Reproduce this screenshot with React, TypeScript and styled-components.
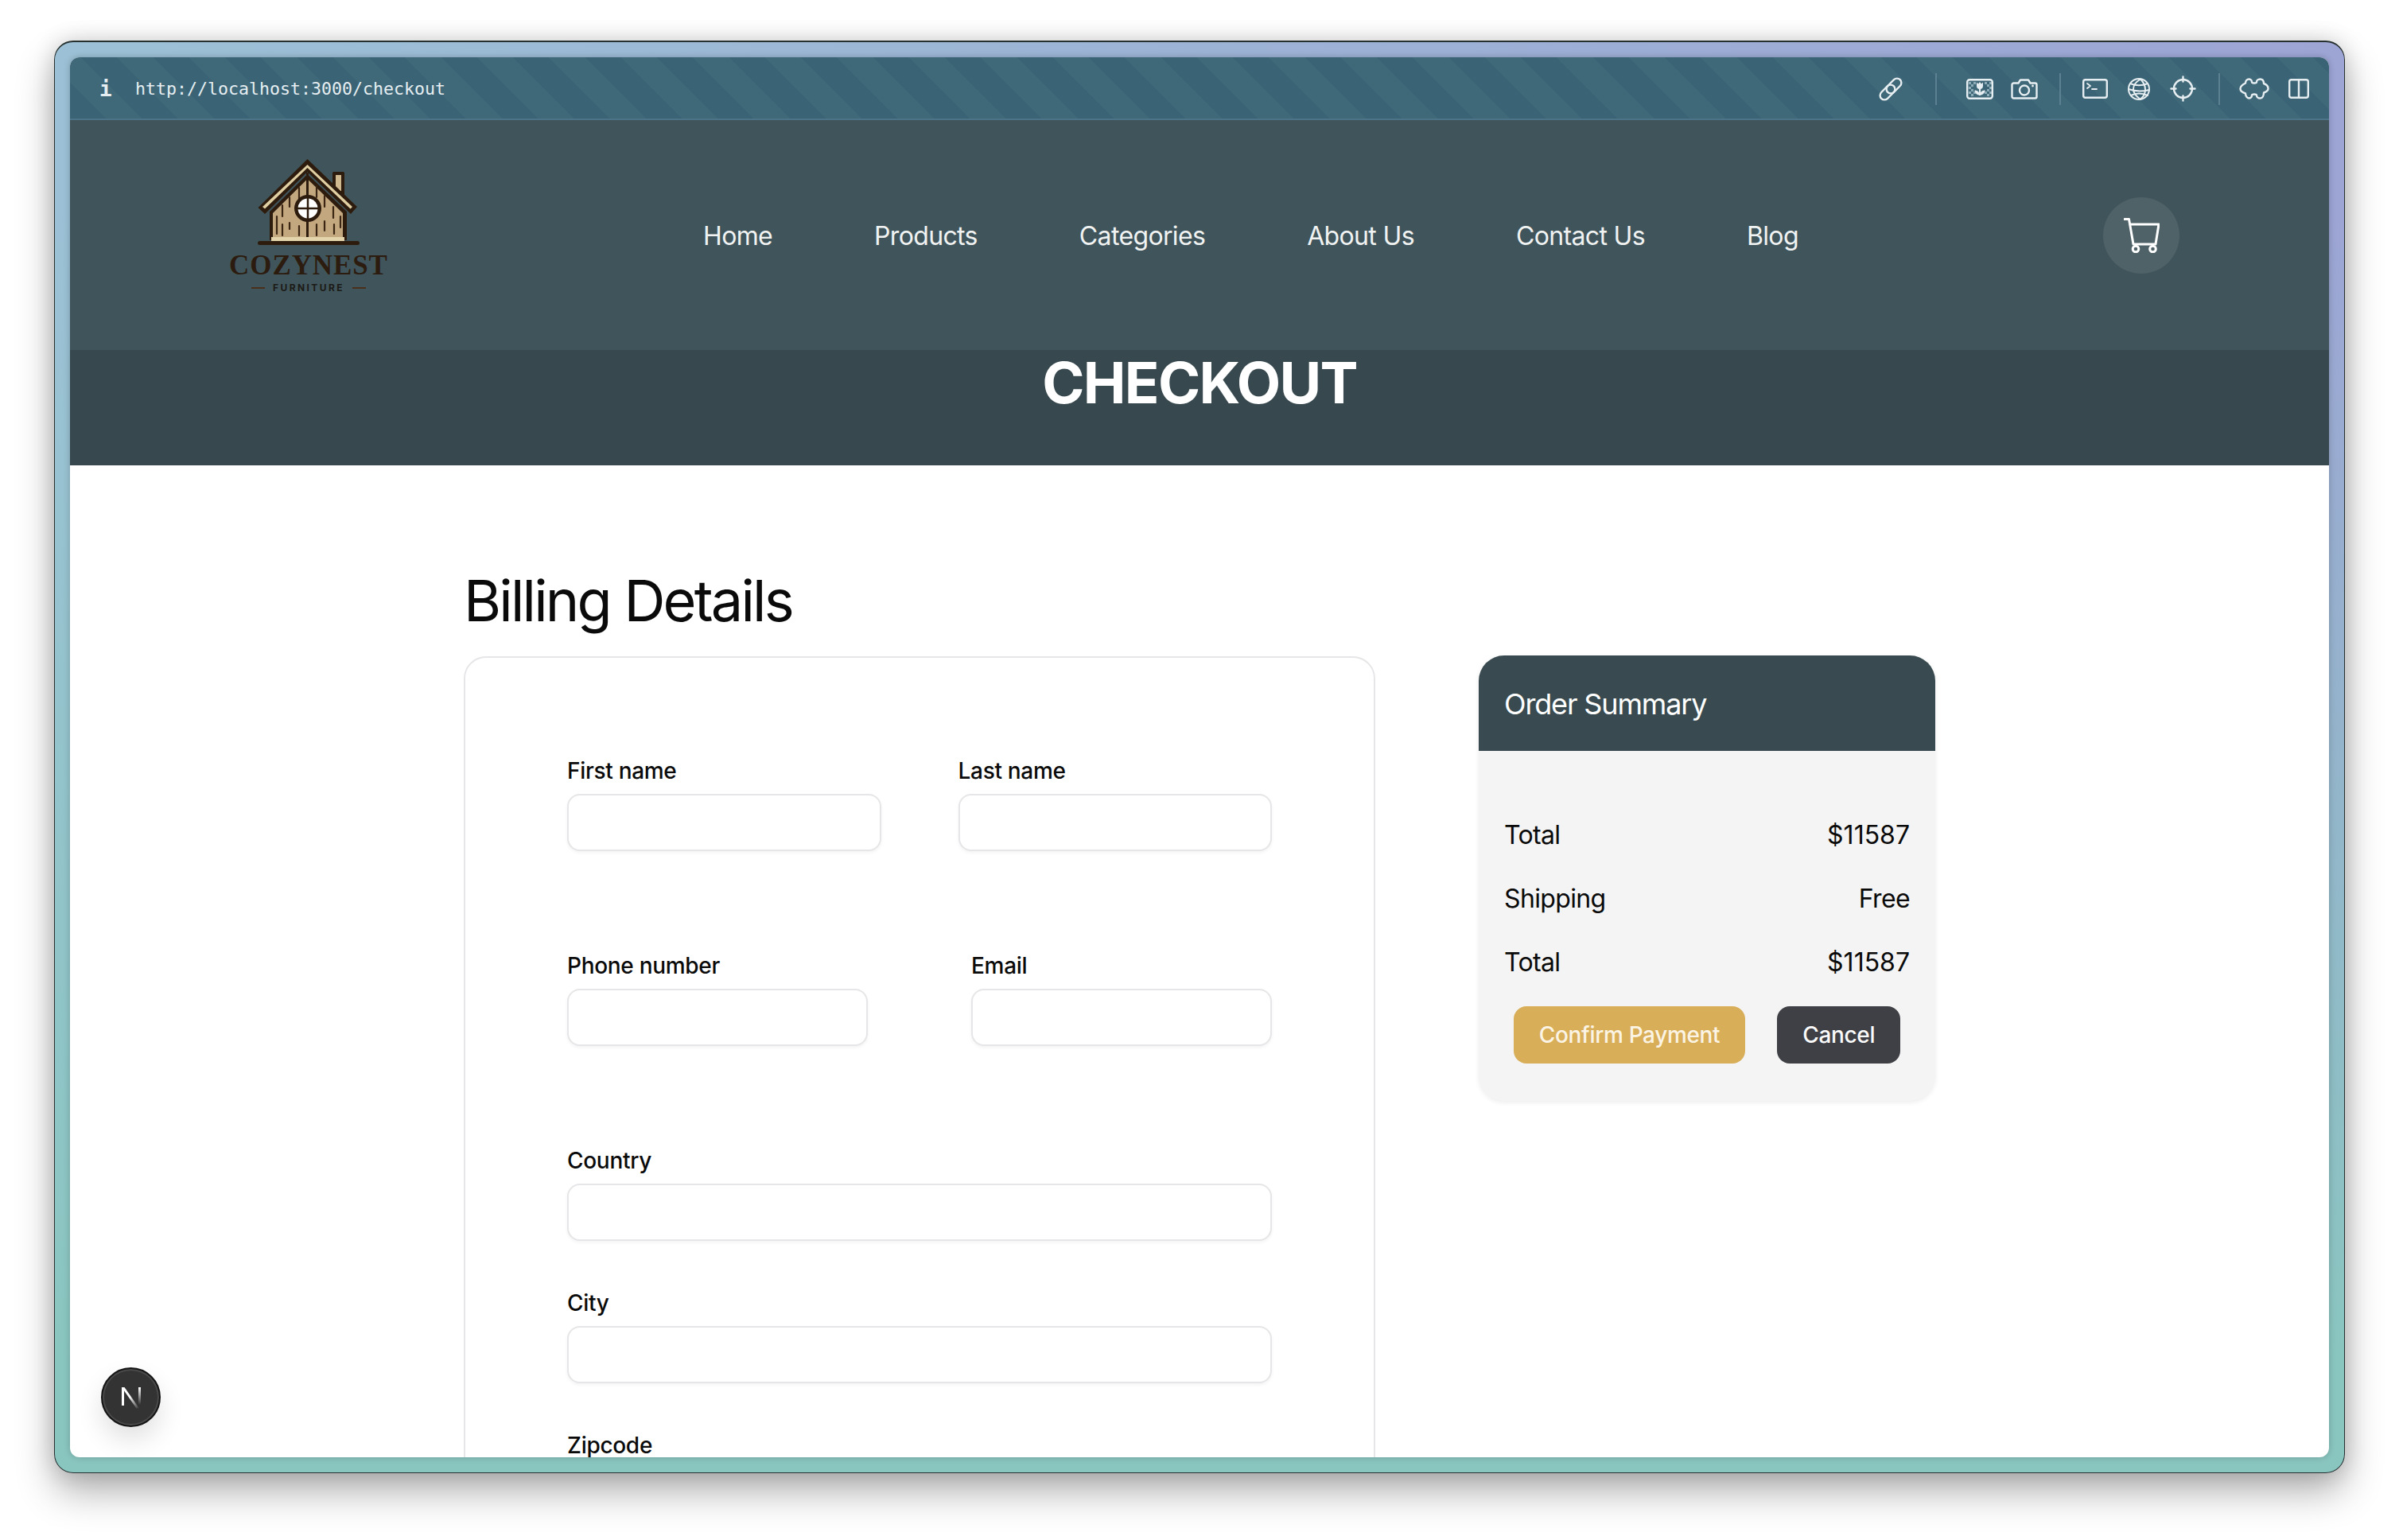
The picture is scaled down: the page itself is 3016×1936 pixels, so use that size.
import React from "react";
import styled, { createGlobalStyle } from "styled-components";

const GlobalStyle = createGlobalStyle`
  * {
    box-sizing: border-box;
  }

  body {
    margin: 0;
    background: #ffffff;
    font-family: Inter, "Liberation Sans", sans-serif;
  }
`;

const Stage = styled.div`
  width: 3016px;
  height: 1936px;
  padding: 51px 68px 84px;
  overflow: hidden;
`;

const Frame = styled.div`
  height: 1801px;
  padding: 20px 19px 19px;
  border: 1px solid #26302f;
  border-top-width: 2px;
  padding-top: 19px;
  border-radius: 24px;
  background: linear-gradient(to bottom, rgba(138, 198, 192, 0) 12%, #8ac6c0 92%),
    linear-gradient(to right, #9cc1d6, #9da5d5);
  box-shadow: 0 24px 48px rgba(0, 0, 0, 0.3), 0 0 28px rgba(0, 0, 0, 0.16);
`;

const Viewport = styled.div`
  position: relative;
  display: flex;
  flex-direction: column;
  height: 1760px;
  overflow: hidden;
  border-radius: 12px;
  background: #ffffff;
  box-shadow: 0 0 8px rgba(0, 0, 0, 0.22);
`;

const Toolbar = styled.div`
  display: flex;
  flex: none;
  align-items: center;
  height: 79px;
  padding: 2px 25px 0 37px;
  border-bottom: 2px solid #4c7486;
  background: repeating-linear-gradient(45deg, #3a6475 0 32px, #3f6879 32px 64px);
  color: #e6eef1;
`;

const InfoGlyph = styled.span`
  width: 12px;
  font-family: "DejaVu Sans Mono", monospace;
  font-size: 26px;
  font-weight: 700;
  line-height: 1;
  text-align: center;
`;

const Url = styled.span`
  margin-left: 33px;
  font-family: "DejaVu Sans Mono", monospace;
  font-size: 21.6px;
`;

const Tools = styled.div`
  display: flex;
  align-items: center;
  margin-left: auto;
`;

const ToolGroup = styled.div<{ $gap: number }>`
  display: flex;
  align-items: center;
  gap: ${(props) => props.$gap}px;
`;

const Divider = styled.span<{ $before: number; $after: number }>`
  width: 2px;
  height: 40px;
  margin: 0 ${(props) => props.$after}px 0 ${(props) => props.$before}px;
  background: #5b8092;
`;

const Nav = styled.nav`
  display: flex;
  flex: none;
  align-items: center;
  height: 289px;
  padding: 0 188px 0 200px;
  background: #40555b;
`;

const Logo = styled.div`
  display: flex;
  flex-direction: column;
  align-items: center;
  width: 200px;
  padding-bottom: 22px;
`;

const Brand = styled.span`
  margin-top: 8px;
  color: #2c1c0f;
  font-family: "Liberation Serif", serif;
  font-size: 35px;
  font-weight: 700;
  letter-spacing: 0.9px;
  line-height: 35px;
`;

const BrandSub = styled.div`
  display: flex;
  align-items: center;
  gap: 10px;
  margin-top: 4px;
  color: #1c1a16;
  font-size: 12px;
  font-weight: 700;
  letter-spacing: 2.4px;
  line-height: 14px;

  &::before,
  &::after {
    content: "";
    width: 17px;
    height: 2px;
    background: #4a2f1b;
  }
`;

const Links = styled.div`
  display: flex;
  gap: 128px;
  margin-left: 396px;
  padding-top: 2px;
`;

const NavLink = styled.a`
  color: #f1f3f3;
  font-size: 32px;
  letter-spacing: -0.65px;
  line-height: 48px;
`;

const CartButton = styled.button`
  display: flex;
  align-items: center;
  justify-content: center;
  width: 96px;
  height: 96px;
  margin-left: auto;
  padding: 0;
  border: 0;
  border-radius: 50%;
  background: #4f6268;
`;

const Hero = styled.header`
  flex: none;
  height: 145px;
  padding-top: 1px;
  background: #37494f;
`;

const HeroTitle = styled.h1`
  margin: 0;
  color: #ffffff;
  font-size: 72px;
  font-weight: 700;
  letter-spacing: -1.7px;
  line-height: 80px;
  text-align: center;
`;

const Main = styled.main`
  flex: 1;
  padding: 130px 0 0 495px;
`;

const BillingTitle = styled.h2`
  margin: 0 0 30px;
  color: #0a0a0a;
  font-size: 72px;
  font-weight: 400;
  letter-spacing: -2.8px;
  line-height: 80px;
`;

const Columns = styled.div`
  display: flex;
  align-items: flex-start;
  gap: 130px;
`;

const FormCard = styled.form`
  display: flex;
  flex: none;
  flex-direction: column;
  gap: 58px;
  width: 1146px;
  padding: 122px 128px 60px;
  border: 2px solid #e6e6e8;
  border-radius: 28px;
`;

const FieldRow = styled.div<{ $gap: number }>`
  display: flex;
  gap: ${(props) => props.$gap}px;
  margin-bottom: 66px;
`;

const Field = styled.label`
  display: flex;
  flex: 1;
  flex-direction: column;
  gap: 9px;
`;

const FieldLabel = styled.span`
  color: #0a0a0a;
  font-size: 28px;
  font-weight: 500;
  letter-spacing: -0.3px;
  line-height: 40px;
`;

const TextInput = styled.input`
  width: 100%;
  height: 72px;
  border: 2px solid #e6e6e8;
  border-radius: 16px;
  background: #ffffff;
  box-shadow: 0 2px 4px rgba(0, 0, 0, 0.05);
`;

const Summary = styled.aside`
  flex: none;
  width: 574px;
  margin-top: -1px;
  overflow: hidden;
  border-radius: 32px;
  background: #f4f4f4;
  box-shadow: 0 2px 6px rgba(0, 0, 0, 0.08);
`;

const SummaryHeader = styled.h3`
  margin: 0;
  padding: 38px 32px 35px;
  background: #394b50;
  color: #ffffff;
  font-size: 36px;
  font-weight: 400;
  letter-spacing: -1.15px;
  line-height: 47px;
`;

const SummaryBody = styled.div`
  padding: 82px 32px 47px;
`;

const SummaryRows = styled.div`
  display: flex;
  flex-direction: column;
  gap: 32px;
`;

const SummaryRow = styled.div`
  display: flex;
  justify-content: space-between;
  color: #0a0a0a;
  font-size: 32px;
  letter-spacing: -0.65px;
  line-height: 48px;
`;

const Amount = styled.span`
  letter-spacing: 0;
`;

const Actions = styled.div`
  display: flex;
  justify-content: center;
  gap: 40px;
  margin-top: 31px;
`;

const ActionButton = styled.button<{ $tone: "gold" | "dark" }>`
  height: 72px;
  padding: 0 32px;
  border: 0;
  border-radius: 16px;
  background: ${(props) => (props.$tone === "gold" ? "#d9ae58" : "#3f4045")};
  color: ${(props) => (props.$tone === "gold" ? "#fbf4e4" : "#fafafa")};
  font-family: inherit;
  font-size: 28px;
  font-weight: 500;
  letter-spacing: -0.35px;
`;

const DevBadge = styled.button`
  position: absolute;
  left: 39px;
  bottom: 38px;
  display: flex;
  align-items: center;
  justify-content: center;
  width: 75px;
  height: 75px;
  padding: 0;
  border: 2px solid #151515;
  border-radius: 50%;
  background: #333333;
  box-shadow: inset 0 0 0 2px #4a4a4a, 0 16px 32px rgba(0, 0, 0, 0.12);
`;

const stroke = {
  fill: "none",
  stroke: "currentColor",
  strokeWidth: 2.4,
  strokeLinecap: "round" as const,
  strokeLinejoin: "round" as const,
};

function LinkIcon() {
  return (
    <svg width="30" height="30" viewBox="0 0 30 30" {...stroke}>
      <rect x="13.500" y="0" width="11" height="22" rx="5.500" transform="rotate(45 19 11)" />
      <rect x="5.500" y="8" width="11" height="22" rx="5.500" transform="rotate(45 11 19)" />
    </svg>
  );
}

function CleanshotIcon() {
  const cells = [
    [3, 3], [3, 9], [3, 15], [6, 6], [6, 12], [6, 18], [9, 3], [9, 15], [23, 3], [23, 15],
    [26, 6], [26, 12], [26, 18], [29, 3], [29, 9], [29, 15],
  ];
  return (
    <svg width="34" height="26" viewBox="0 0 34 26">
      {cells.map(([x, y]) => (
        <rect key={`${x}-${y}`} x={x} y={y + 1} width="3" height="3" fill="#a9c3cd" opacity="0.75" />
      ))}
      <rect x="1.200" y="1.200" width="31.600" height="23.600" rx="3" fill="none" stroke="currentColor" strokeWidth="2.400" />
      <path d="M13 4.500l2 2 2-2.500 2 2.500 2-2v4.500a4 4 0 0 1-8 0z" fill="currentColor" />
      <path d="M17 12v9" stroke="currentColor" strokeWidth="2" />
      <path d="M10.500 14.500c3.500 0 6 2 6.500 6-3.500 0-6-2-6.500-6zM23.500 14.500c-3.500 0-6 2-6.500 6 3.500 0 6-2 6.500-6z" fill="currentColor" />
    </svg>
  );
}

function CameraIcon() {
  return (
    <svg width="34" height="26" viewBox="0 0 34 26" {...stroke}>
      <path d="M3.500 5.500h6l2.500-4h10l2.500 4h6a2 2 0 0 1 2 2v15a2 2 0 0 1-2 2h-27a2 2 0 0 1-2-2v-15a2 2 0 0 1 2-2z" />
      <circle cx="17" cy="14.500" r="6" />
      <circle cx="27.500" cy="9" r="1.400" fill="currentColor" stroke="none" />
    </svg>
  );
}

function TerminalIcon() {
  return (
    <svg width="32" height="25" viewBox="0 0 32 25" {...stroke}>
      <rect x="1.200" y="1.200" width="29.600" height="22.600" rx="2.500" />
      <path d="M6 6l4 3-4 3M12 13h6" strokeWidth="1.800" />
    </svg>
  );
}

function GlobeIcon() {
  return (
    <svg width="30" height="28" viewBox="0 0 30 28" {...stroke} strokeWidth="2">
      <circle cx="15" cy="14" r="13" />
      <path d="M17 1.500c-5 3-9 7-9 12.500s4 9 9 13M17 1.500c4 4 6 8 6 13s-2 9-6 12" />
      <path d="M4 7c7 3 15 3 22 0M2 14c8 3 18 3 26 1M5 22c6-3 14-3 21 0" />
    </svg>
  );
}

function CrosshairIcon() {
  return (
    <svg width="33" height="33" viewBox="0 0 33 33" {...stroke}>
      <circle cx="16.500" cy="16.500" r="11.500" />
      <path d="M16.500 1.500v6M16.500 25.500v6M1.500 16.500h6M25.500 16.500h6" />
    </svg>
  );
}

function PuzzleIcon() {
  return (
    <svg width="38" height="27" viewBox="0 0 38 27" {...stroke}>
      <path d="M8 6.500C8 3.500 10 1.500 12.500 1.500 15 1.500 16 3.500 16 5c0 2 6 2 6 0 0-1.500 1.500-3.500 4.500-3.500S31 4 31 7c3 1 5.500 3.500 5.500 6.500S34 17.500 31 18.500c0 3.500-1.500 7-4.500 7S22 23.500 22 22c0-2-6-2-6 0 0 1.500-1 3.500-3.500 3.500S8 22.500 8 19.500C5 18.500 1.500 16.500 1.500 13.500S5 8 8 6.500z" />
    </svg>
  );
}

function SplitIcon() {
  return (
    <svg width="26" height="25" viewBox="0 0 26 25" {...stroke}>
      <rect x="1.200" y="1.200" width="23.600" height="22.600" rx="2.500" />
      <path d="M13 1.500v22" />
    </svg>
  );
}

function CartIcon() {
  return (
    <svg width="45" height="44" viewBox="0 0 45 44" fill="none" stroke="#ffffff" strokeWidth="3" strokeLinecap="round" strokeLinejoin="round">
      <path d="M1 1.500h5.500L12 33h28l4-25H7.500" />
      <circle cx="15" cy="39" r="3.800" />
      <circle cx="36.500" cy="39" r="3.800" />
    </svg>
  );
}

function NextMark() {
  return (
    <svg width="28" height="30" viewBox="0 0 28 30" fill="none">
      <defs>
        <linearGradient id="nextDiag" x1="0" y1="0" x2="1" y2="1">
          <stop offset="0.45" stopColor="#ffffff" />
          <stop offset="1" stopColor="#ffffff" stopOpacity="0" />
        </linearGradient>
        <linearGradient id="nextRight" x1="0" y1="0" x2="0" y2="1">
          <stop offset="0" stopColor="#ffffff" />
          <stop offset="1" stopColor="#ffffff" stopOpacity="0" />
        </linearGradient>
      </defs>
      <rect x="2" y="2" width="3" height="23" fill="#ffffff" />
      <path d="M2 2h3.500L24 28.500h-3.500z" fill="url(#nextDiag)" />
      <rect x="23" y="2" width="3" height="22" fill="url(#nextRight)" />
    </svg>
  );
}

function HouseMark() {
  const grain = [
    "M24 72v22", "M31 58v14", "M31 82v14", "M40 48v12", "M40 80v8", "M52 36v16", "M52 84v12",
    "M74 34v14", "M74 82v14", "M84 46v14", "M84 78v12", "M95 60v14", "M96 82v12", "M104 72v14",
  ];
  return (
    <svg width="128" height="108" viewBox="0 0 128 108">
      <rect x="94" y="16" width="15" height="30" rx="1.500" fill="#2d1c0e" />
      <rect x="98" y="20" width="7" height="20" fill="#d0b88f" />
      <path d="M62.500 0L125 60l-8 9-54.500-53L9 69l-8.500-8z" fill="#2d1c0e" />
      <path d="M62.500 7L119 60l-2.500 2.500L62.500 11 9 62.500 6 60z" fill="#e0cfa3" />
      <path d="M62.500 19L15 66v36h97V66z" fill="#2d1c0e" />
      <path d="M62.500 25L19 68v31h88V68z" fill="#c3a77f" />
      <path d="M62.500 17v83" stroke="#2d1c0e" strokeWidth="3" />
      {grain.map((d) => (
        <path key={d} d={d} stroke="#3b2614" strokeWidth="2.200" strokeLinecap="round" />
      ))}
      <circle cx="63" cy="62" r="17" fill="#2d1c0e" />
      <circle cx="63" cy="62" r="12.500" fill="#ffffff" />
      <path d="M63 49v26M50 62h26" stroke="#2d1c0e" strokeWidth="2.500" />
      <rect x="17" y="98" width="92" height="5" fill="#e4d4ac" />
      <rect x="0" y="103" width="128" height="5" rx="2.500" fill="#2d1c0e" />
    </svg>
  );
}

const navItems = ["Home", "Products", "Categories", "About Us", "Contact Us", "Blog"];

const totals = [
  { label: "Total", value: <Amount>$11587</Amount> },
  { label: "Shipping", value: <span>Free</span> },
  { label: "Total", value: <Amount>$11587</Amount> },
];

export default function App() {
  return (
    <Stage>
      <GlobalStyle />
      <Frame>
        <Viewport>
          <Toolbar>
            <InfoGlyph>i</InfoGlyph>
            <Url>http://localhost:3000/checkout</Url>
            <Tools>
              <LinkIcon />
              <Divider $before={41} $after={37} />
              <ToolGroup $gap={22}>
                <CleanshotIcon />
                <CameraIcon />
              </ToolGroup>
              <Divider $before={27} $after={27} />
              <ToolGroup $gap={24}>
                <TerminalIcon />
                <GlobeIcon />
                <CrosshairIcon />
              </ToolGroup>
              <Divider $before={28} $after={24} />
              <ToolGroup $gap={24}>
                <PuzzleIcon />
                <SplitIcon />
              </ToolGroup>
            </Tools>
          </Toolbar>

          <Nav>
            <Logo>
              <HouseMark />
              <Brand>COZYNEST</Brand>
              <BrandSub>FURNITURE</BrandSub>
            </Logo>
            <Links>
              {navItems.map((item) => (
                <NavLink key={item}>{item}</NavLink>
              ))}
            </Links>
            <CartButton>
              <CartIcon />
            </CartButton>
          </Nav>

          <Hero>
            <HeroTitle>CHECKOUT</HeroTitle>
          </Hero>

          <Main>
            <BillingTitle>Billing Details</BillingTitle>
            <Columns>
              <FormCard>
                <FieldRow $gap={97}>
                  <Field>
                    <FieldLabel>First name</FieldLabel>
                    <TextInput />
                  </Field>
                  <Field>
                    <FieldLabel>Last name</FieldLabel>
                    <TextInput />
                  </Field>
                </FieldRow>
                <FieldRow $gap={130}>
                  <Field>
                    <FieldLabel>Phone number</FieldLabel>
                    <TextInput />
                  </Field>
                  <Field>
                    <FieldLabel>Email</FieldLabel>
                    <TextInput />
                  </Field>
                </FieldRow>
                <Field>
                  <FieldLabel>Country</FieldLabel>
                  <TextInput />
                </Field>
                <Field>
                  <FieldLabel>City</FieldLabel>
                  <TextInput />
                </Field>
                <Field>
                  <FieldLabel>Zipcode</FieldLabel>
                  <TextInput />
                </Field>
              </FormCard>

              <Summary>
                <SummaryHeader>Order Summary</SummaryHeader>
                <SummaryBody>
                  <SummaryRows>
                    {totals.map((row, index) => (
                      <SummaryRow key={index}>
                        <span>{row.label}</span>
                        {row.value}
                      </SummaryRow>
                    ))}
                  </SummaryRows>
                  <Actions>
                    <ActionButton $tone="gold">Confirm Payment</ActionButton>
                    <ActionButton $tone="dark">Cancel</ActionButton>
                  </Actions>
                </SummaryBody>
              </Summary>
            </Columns>
          </Main>

          <DevBadge>
            <NextMark />
          </DevBadge>
        </Viewport>
      </Frame>
    </Stage>
  );
}
